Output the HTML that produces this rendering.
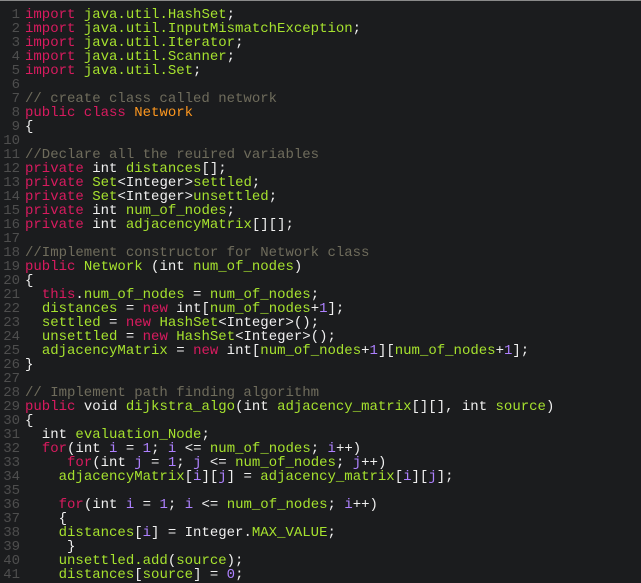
<!DOCTYPE html>
<html><head><meta charset="utf-8"><style>
html,body{margin:0;padding:0;background:#1b1c1e;}
body{width:641px;height:570px;overflow:hidden;position:relative;border-top:1px solid #8a8a8a;box-sizing:border-box;}
.c{position:absolute;top:7px;left:0;font-family:"Liberation Mono",monospace;font-size:14px;line-height:14px;color:#f0f0f0;}
.l{height:14px;white-space:pre;}
.n{display:inline-block;width:20px;text-align:right;color:#4e4e4e;margin-right:5px;}
.k{color:#d81b5f}.g{color:#a6e22e}.o{color:#fd971f}.m{color:#6f6c5c}.p{color:#ae81ff}
</style></head><body><div class="c">
<div class="l"><span class="n">1</span><span class="k">import</span> <span class="g">java.util.HashSet</span>;</div>
<div class="l"><span class="n">2</span><span class="k">import</span> <span class="g">java.util.InputMismatchException</span>;</div>
<div class="l"><span class="n">3</span><span class="k">import</span> <span class="g">java.util.Iterator</span>;</div>
<div class="l"><span class="n">4</span><span class="k">import</span> <span class="g">java.util.Scanner</span>;</div>
<div class="l"><span class="n">5</span><span class="k">import</span> <span class="g">java.util.Set</span>;</div>
<div class="l"><span class="n">6</span></div>
<div class="l"><span class="n">7</span><span class="m">// create class called network</span></div>
<div class="l"><span class="n">8</span><span class="k">public class</span> <span class="o">Network</span></div>
<div class="l"><span class="n">9</span>{</div>
<div class="l"><span class="n">10</span></div>
<div class="l"><span class="n">11</span><span class="m">//Declare all the reuired variables</span></div>
<div class="l"><span class="n">12</span><span class="k">private</span> int <span class="g">distances</span>[];</div>
<div class="l"><span class="n">13</span><span class="k">private</span> <span class="g">Set</span>&lt;Integer&gt;<span class="g">settled</span>;</div>
<div class="l"><span class="n">14</span><span class="k">private</span> <span class="g">Set</span>&lt;Integer&gt;<span class="g">unsettled</span>;</div>
<div class="l"><span class="n">15</span><span class="k">private</span> int <span class="g">num_of_nodes</span>;</div>
<div class="l"><span class="n">16</span><span class="k">private</span> int <span class="g">adjacencyMatrix</span>[][];</div>
<div class="l"><span class="n">17</span></div>
<div class="l"><span class="n">18</span><span class="m">//Implement constructor for Network class</span></div>
<div class="l"><span class="n">19</span><span class="k">public</span> <span class="g">Network</span> (int <span class="g">num_of_nodes</span>)</div>
<div class="l"><span class="n">20</span>{</div>
<div class="l"><span class="n">21</span>  <span class="k">this</span>.<span class="g">num_of_nodes</span> = <span class="g">num_of_nodes</span>;</div>
<div class="l"><span class="n">22</span>  <span class="g">distances</span> = <span class="k">new</span> int[<span class="g">num_of_nodes</span>+<span class="p">1</span>];</div>
<div class="l"><span class="n">23</span>  <span class="g">settled</span> = <span class="k">new</span> <span class="g">HashSet</span>&lt;Integer&gt;();</div>
<div class="l"><span class="n">24</span>  <span class="g">unsettled</span> = <span class="k">new</span> <span class="g">HashSet</span>&lt;Integer&gt;();</div>
<div class="l"><span class="n">25</span>  <span class="g">adjacencyMatrix</span> = <span class="k">new</span> int[<span class="g">num_of_nodes</span>+<span class="p">1</span>][<span class="g">num_of_nodes</span>+<span class="p">1</span>];</div>
<div class="l"><span class="n">26</span>}</div>
<div class="l"><span class="n">27</span></div>
<div class="l"><span class="n">28</span><span class="m">// Implement path finding algorithm</span></div>
<div class="l"><span class="n">29</span><span class="k">public</span> void <span class="g">dijkstra_algo</span>(int <span class="g">adjacency_matrix</span>[][], int <span class="g">source</span>)</div>
<div class="l"><span class="n">30</span>{</div>
<div class="l"><span class="n">31</span>  int <span class="g">evaluation_Node</span>;</div>
<div class="l"><span class="n">32</span>  <span class="k">for</span>(int <span class="p">i</span> = <span class="p">1</span>; <span class="p">i</span> &lt;= <span class="g">num_of_nodes</span>; <span class="p">i</span>++)</div>
<div class="l"><span class="n">33</span>     <span class="k">for</span>(int <span class="p">j</span> = <span class="p">1</span>; <span class="p">j</span> &lt;= <span class="g">num_of_nodes</span>; <span class="p">j</span>++)</div>
<div class="l"><span class="n">34</span>    <span class="g">adjacencyMatrix</span>[<span class="p">i</span>][<span class="p">j</span>] = <span class="g">adjacency_matrix</span>[<span class="p">i</span>][<span class="p">j</span>];</div>
<div class="l"><span class="n">35</span></div>
<div class="l"><span class="n">36</span>    <span class="k">for</span>(int <span class="p">i</span> = <span class="p">1</span>; <span class="p">i</span> &lt;= <span class="g">num_of_nodes</span>; <span class="p">i</span>++)</div>
<div class="l"><span class="n">37</span>    {</div>
<div class="l"><span class="n">38</span>    <span class="g">distances</span>[<span class="p">i</span>] = Integer.<span class="g">MAX_VALUE</span>;</div>
<div class="l"><span class="n">39</span>     }</div>
<div class="l"><span class="n">40</span>    <span class="g">unsettled.add</span>(<span class="g">source</span>);</div>
<div class="l"><span class="n">41</span>    <span class="g">distances</span>[<span class="g">source</span>] = <span class="p">0</span>;</div>
</div></body></html>
